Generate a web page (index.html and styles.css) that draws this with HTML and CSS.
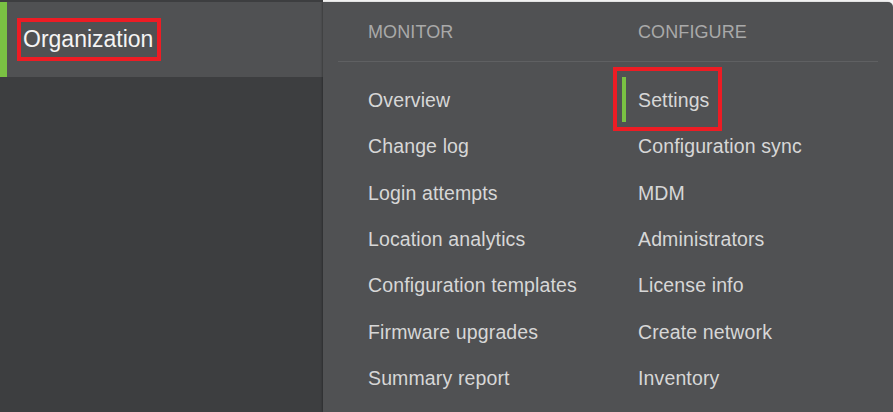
FILE: index.html
```html
<!DOCTYPE html>
<html lang="en">
<head>
<meta charset="utf-8">
<title>Organization menu</title>
<link rel="stylesheet" href="styles.css">
</head>
<body>
<div class="page">
  <aside class="sidebar">
    <div class="org-item"><span class="org-label">Organization</span></div>
  </aside>
  <nav class="flyout">
    <div class="heads">
      <div class="head">MONITOR</div>
      <div class="head">CONFIGURE</div>
    </div>
    <div class="divider"></div>
    <div class="cols">
      <ul class="col">
        <li class="item">Overview</li>
        <li class="item">Change log</li>
        <li class="item">Login attempts</li>
        <li class="item">Location analytics</li>
        <li class="item">Configuration templates</li>
        <li class="item">Firmware upgrades</li>
        <li class="item">Summary report</li>
      </ul>
      <ul class="col">
        <li class="item active">Settings</li>
        <li class="item">Configuration sync</li>
        <li class="item">MDM</li>
        <li class="item">Administrators</li>
        <li class="item">License info</li>
        <li class="item">Create network</li>
        <li class="item">Inventory</li>
      </ul>
    </div>
  </nav>
</div>
</body>
</html>
```
FILE: styles.css
```css
html, body {
  margin: 0;
  padding: 0;
  background: #f4f4f4;
  height: 100%;
  overflow: hidden;
}
.page {
  display: flex;
  height: 412px;
  font-family: "Liberation Sans", Arial, sans-serif;
}
.sidebar {
  width: 323px;
  flex: 0 0 323px;
  background: #3d3e40;
}
.org-item {
  margin-top: 2px;
  height: 75px;
  box-sizing: border-box;
  border-left: 7px solid #7ac143;
  background: #505153;
  padding: 16px 0 0 10px;
}
.org-label {
  display: inline-block;
  box-sizing: border-box;
  width: 144px;
  height: 43px;
  border: 4px solid #ed1c24;
  padding-left: 2px;
  line-height: 35px;
  font-size: 23px;
  color: #f4f4f4;
}
.flyout {
  flex: 1;
  margin-top: 2px;
  background: #505153;
  border-top-right-radius: 5px;
  box-shadow: -1px 0 2px rgba(0,0,0,0.25);
}
.heads {
  display: grid;
  grid-template-columns: 270px 1fr;
  padding-left: 45px;
  height: 59px;
  line-height: 60px;
  font-size: 18px;
  letter-spacing: 0.1px;
  color: #a9a9a9;
}
.divider {
  height: 1px;
  margin: 0 15px;
  background: #5f6062;
}
.cols {
  display: grid;
  grid-template-columns: 270px 1fr;
  padding: 15px 0 0 45px;
}
.col {
  list-style: none;
  margin: 0;
  padding: 0;
}
.item {
  height: 46.33px;
  line-height: 46.33px;
  font-size: 19.5px;
  letter-spacing: 0.13px;
  color: #d7d7d7;
  white-space: nowrap;
}
.item.active {
  position: relative;
}
.item.active::before {
  content: "";
  position: absolute;
  left: -16px;
  top: 0;
  width: 4px;
  height: 45px;
  background: #7ac143;
}
.item.active::after {
  content: "";
  position: absolute;
  left: -25px;
  top: -10px;
  width: 109px;
  height: 64px;
  box-sizing: border-box;
  border: 4px solid #ed1c24;
}
```
